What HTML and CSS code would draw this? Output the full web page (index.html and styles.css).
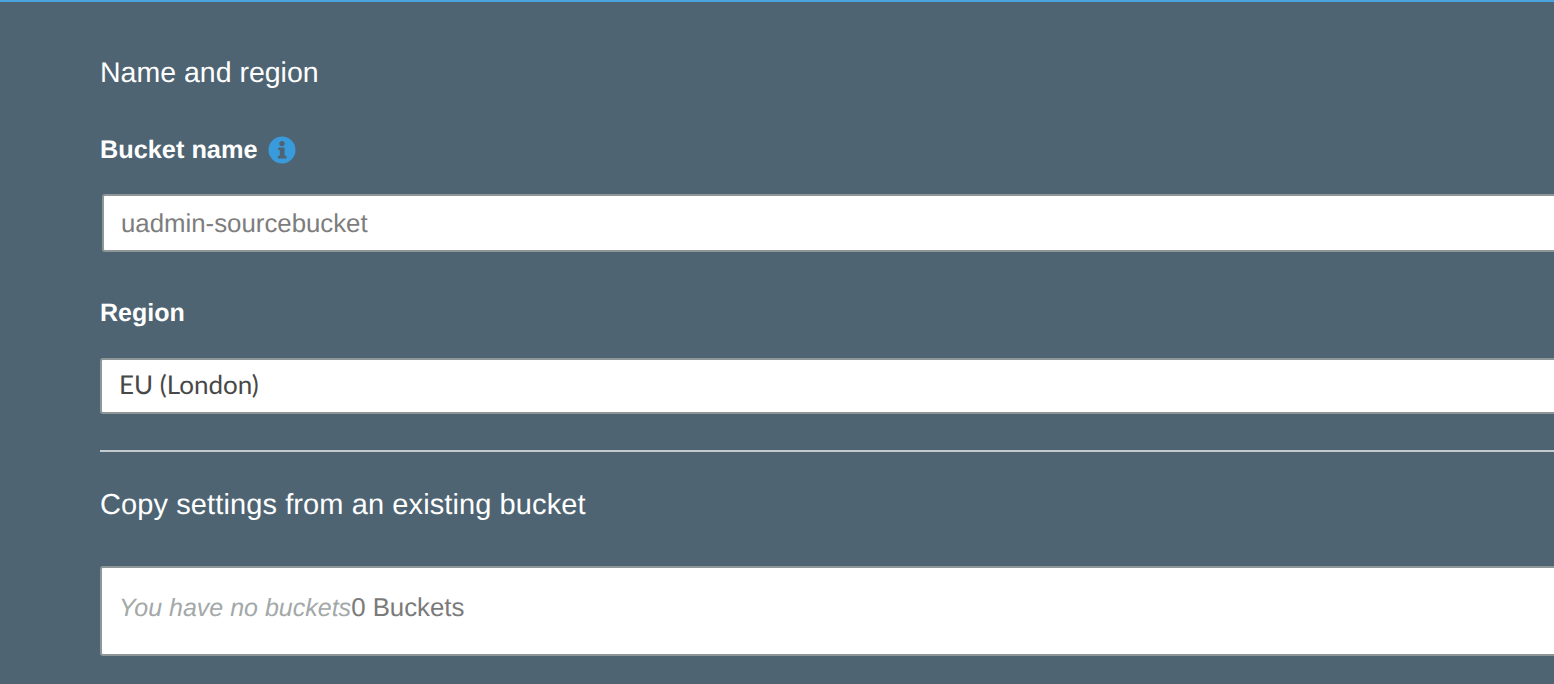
FILE: index.html
```html
<!DOCTYPE html>
<html lang="en">
<head>
<meta charset="utf-8">
<title>Name and region</title>
<link rel="stylesheet" href="styles.css">
</head>
<body>
<div class="accent"></div>
<main class="panel">
  <h2 class="heading heading-first">Name and region</h2>
  <div class="label-row">
    <label class="label" for="bucket">Bucket name</label>
    <svg class="info" viewBox="0 0 28 28" width="28" height="28" aria-hidden="true">
      <circle cx="14" cy="14" r="13.5" fill="#3a9bdc"/>
      <circle cx="14" cy="7.6" r="2.7" fill="#4e6472"/>
      <path d="M10.2 11.4h6.4v8.4h1.9v2.6h-8.6v-2.6h1.9v-5.8h-1.6z" fill="#4e6472"/>
    </svg>
  </div>
  <input class="field field-name" id="bucket" type="text" placeholder="uadmin-sourcebucket">
  <div class="label-row label-row-region"><span class="label label-region">Region</span></div>
  <div class="field field-region">EU (London)</div>
  <hr class="divider">
  <h2 class="heading heading-copy">Copy settings from an existing bucket</h2>
  <div class="field field-copy"><em class="empty">You have no buckets</em><span class="count">0 Buckets</span></div>
</main>
</body>
</html>
```
FILE: styles.css
```css
html, body {
  margin: 0;
  height: 100%;
  overflow: hidden;
  background: #4e6472;
}
body {
  font-family: "Liberation Sans", Arial, sans-serif;
  color: #fff;
  text-rendering: geometricPrecision;
}
.accent {
  height: 2px;
  background: #4aa3dc;
}
.panel {
  padding: 53px 0 0 100px;
  width: 1480px;
}
.heading {
  margin: 0;
  font-size: 28.5px;
  line-height: 36px;
  font-weight: 400;
}
.heading-first {
  margin-bottom: 43px;
}
.heading-copy {
  font-size: 29px;
  letter-spacing: 0.1px;
  margin-top: 35px;
  margin-bottom: 43px;
}
.label-row {
  display: flex;
  align-items: center;
  gap: 11px;
  height: 32px;
  margin-bottom: 28px;
}
.label-row-region {
  height: 30px;
  margin-bottom: 30px;
}
.label {
  font-size: 25.3px;
  font-weight: 700;
}
.label-region {
  font-size: 25px;
}
.info {
  flex: none;
}
.field {
  display: flex;
  align-items: center;
  box-sizing: border-box;
  width: 100%;
  background: #fff;
  border: 2px solid #8f9698;
  border-radius: 3px;
  font-family: "Liberation Sans", Arial, sans-serif;
  font-size: 25px;
  text-rendering: geometricPrecision;
}
.field-name {
  margin-left: 2px;
  height: 58px;
  padding: 2px 17px 0;
  margin-bottom: 46px;
  font-size: 25.8px;
  outline: none;
}
.field-name::placeholder {
  color: #7d7d7d;
  opacity: 1;
}
.field-region {
  height: 56px;
  padding: 0 17px 4px;
  font-family: Lato, sans-serif;
  font-size: 26px;
  color: #484848;
}
.divider {
  margin: 36px 0 0;
  border: 0;
  height: 2px;
  background: #c3cbcf;
}
.field-copy {
  height: 90px;
  padding: 0 17px 6px;
}
.empty {
  color: #a3a8a8;
}
.count {
  font-size: 25.8px;
  color: #7a7a7a;
}
```
